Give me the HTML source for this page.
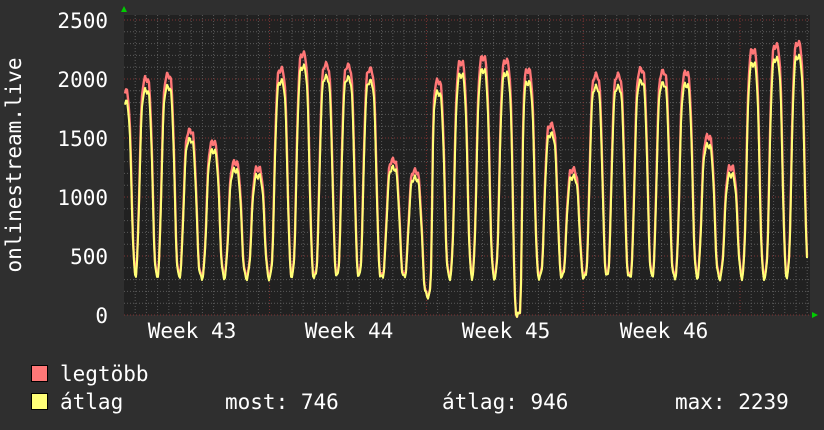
<!DOCTYPE html>
<html><head><meta charset="utf-8"><style>
html,body{margin:0;padding:0;background:#2f2f2f;width:824px;height:430px;overflow:hidden}
svg{display:block}
text{font-family:"DejaVu Sans Mono","Liberation Mono",monospace;font-size:21px;fill:#fff}
</style></head><body>
<svg id="s" width="824" height="430" xmlns="http://www.w3.org/2000/svg">
<rect width="824" height="430" fill="#2f2f2f"/>
<rect x="124" y="15" width="686" height="300" fill="#212121"/>
<g id="grid"></g>
<polyline id="mx" fill="none" stroke="#f77" stroke-width="2.4" stroke-linejoin="round"/>
<polyline id="av" fill="none" stroke="#ff7" stroke-width="2" stroke-linejoin="round"/>
<polygon points="121,12 127,12 124,6" fill="#0c0"/>
<polygon points="812,312 812,318 818,315" fill="#0c0"/>
<g text-anchor="end">
<text x="108" y="28">2500</text>
<text x="108" y="87">2000</text>
<text x="108" y="146">1500</text>
<text x="108" y="205">1000</text>
<text x="108" y="264">500</text>
<text x="108" y="323">0</text>
</g>
<text x="192" y="338" text-anchor="middle">Week 43</text>
<text x="349" y="338" text-anchor="middle">Week 44</text>
<text x="506" y="338" text-anchor="middle">Week 45</text>
<text x="664" y="338" text-anchor="middle">Week 46</text>
<text transform="translate(21,165) rotate(-90)" text-anchor="middle">onlinestream.live</text>
<rect x="31.5" y="365.5" width="16" height="16" fill="#f77" stroke="#000"/>
<rect x="31.5" y="393.5" width="16" height="16" fill="#ff7" stroke="#000"/>
<text x="60" y="381">legtöbb</text>
<text x="60" y="409">átlag</text>
<text x="225" y="409">most: 746</text>
<text x="442" y="409">átlag: 946</text>
<text x="675" y="409">max: 2239</text>
</svg>
<script>
var g=document.getElementById('grid'),h='';
for(var i=0;i<=25;i++){var y=315-i*11.8;var maj=i%5==0;
h+='<line x1="124" x2="810" y1="'+y+'" y2="'+y+'" stroke="'+(maj?'#803333':'#5a5a5a')+'" stroke-dasharray="1,2"/>';}
for(var x=124+11.2;x<810;x+=11.2){var m=((x-270)%157+157)%157;var maj=m<2||m>155;
h+='<line x1="'+x+'" x2="'+x+'" y1="15" y2="315" stroke="'+(maj?'#803333':'#5a5a5a')+'" stroke-dasharray="1,2"/>';}
g.innerHTML=h;
var P=[[125,1900],[146,2000],[168,2030],[190,1560],[213,1460],[235,1290],[258,1240],[281,2080],[303,2210],[326,2120],[348,2110],[370,2080],[393,1310],[415,1220],[438,1980],[461,2140],[483,2180],[506,2150],[528,2070],[551,1610],[573,1230],[596,2030],[618,2030],[641,2080],[663,2060],[686,2050],[708,1510],[731,1250],[753,2240],[776,2280],[798,2300]];
var T={428:170,518:0};
function val(x){var v=330;for(var i=0;i<P.length;i++){var d=(x-P[i][0])/6;v=Math.max(v,330+(P[i][1]-330)*Math.exp(-d*d*d*d/2));}
for(var k in T){var d=(x-k)/4;v=Math.min(v,T[k]+(v-T[k])*(1-Math.exp(-d*d*d*d)));}return v;}
var a=[],b=[];
for(var x=125;x<=807;x++){var v=val(x);var n=Math.sin(x*1.7)*25;
var av=v*0.95+n;var mx=v+n;
a.push(x+','+(315-mx*0.118).toFixed(1));b.push(x+','+(315-av*0.118).toFixed(1));}
document.getElementById('mx').setAttribute('points',a.join(' '));
document.getElementById('av').setAttribute('points',b.join(' '));
</script>
</body></html>
